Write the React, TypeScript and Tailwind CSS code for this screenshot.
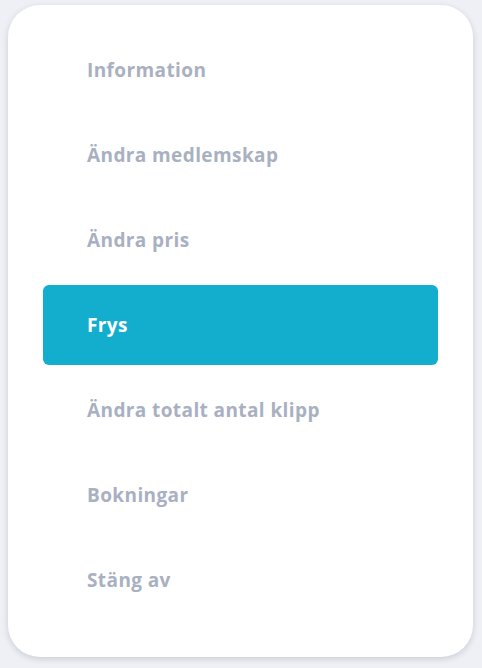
import React from 'react';

const items = [
    'Information',
    'Ändra medlemskap',
    'Ändra pris',
    'Frys',
    'Ändra totalt antal klipp',
    'Bokningar',
    'Stäng av',
];

const App: React.FC = () => {
    const active = 'Frys';

    return (
        <div className="min-h-screen bg-[#eef0f5] px-2 pt-[5px]" style={{ fontFamily: '"Open Sans", "Noto Sans", sans-serif' }}>
            <div className="w-[465px] h-[652px] bg-white rounded-[32px] shadow-[0_2px_6px_rgba(40,50,80,0.18)] px-[35px] pt-[25px] pb-[37px] flex flex-col gap-[5px]">
                {items.map(item => (
                    <button
                        key={item}
                        className={`h-[80px] w-full text-left pl-[44px] rounded-[6px] text-[19px] font-bold tracking-[0.4px] ${
                            item === active ? 'bg-[#13aecd] text-white' : 'text-[#a9b0c1]'
                        }`}
                    >
                        {item}
                    </button>
                ))}
            </div>
        </div>
    );
};

export default App;
